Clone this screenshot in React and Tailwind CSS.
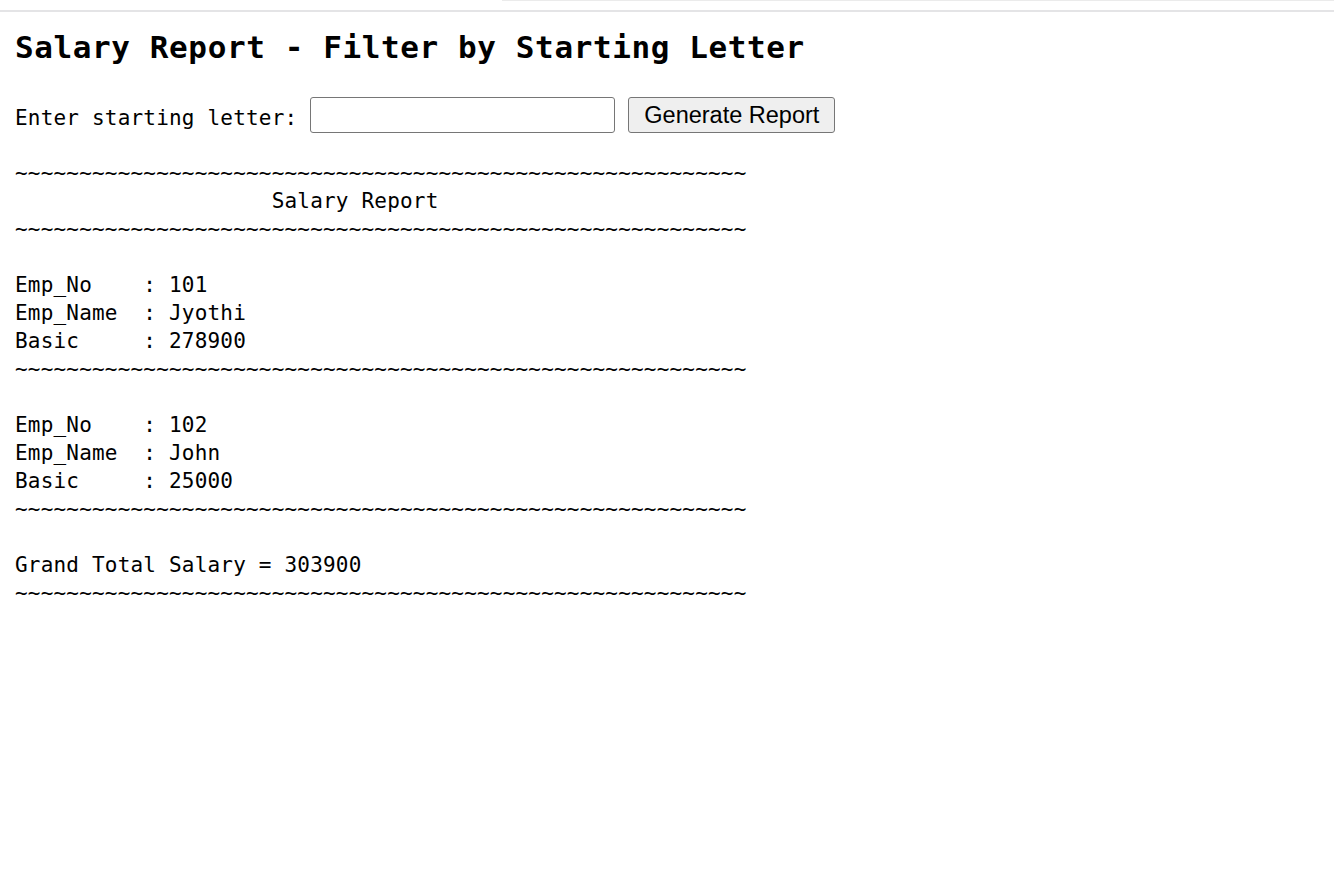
import React from "react";

const T = "~".repeat(57);
const report = [
  T,
  " ".repeat(20) + "Salary Report",
  T,
  "",
  "Emp_No    : 101",
  "Emp_Name  : Jyothi",
  "Basic     : 278900",
  T,
  "",
  "Emp_No    : 102",
  "Emp_Name  : John",
  "Basic     : 25000",
  T,
  "",
  "Grand Total Salary = 303900",
  T,
].join("\n");

export default function App() {
  return (
    <div className="min-h-[880px] bg-white text-black">
      <div className="flex h-px">
        <div className="w-[502px]" />
        <div className="flex-1 bg-[#ebebeb]" />
      </div>
      <div className="mt-[9px] h-[2px] bg-[#e4e4e6]" />
      <div className="px-[15px]">
        <h2 className="mt-[15px] font-['DejaVu_Sans_Mono',monospace] text-[31px] font-bold leading-[40px] tracking-[0.6px]">
          Salary Report - Filter by Starting Letter
        </h2>
        <div className="mt-[30px] flex h-[36px] items-center">
          <label className="pt-[6px] font-['DejaVu_Sans_Mono',monospace] text-[21px] leading-[28px] tracking-[0.19px]">
            Enter starting letter:
          </label>
          <input
            type="text"
            className="ml-[13px] h-[36px] w-[305px] rounded-[3px] border border-[#767676] bg-white px-1 outline-none"
          />
          <button className="ml-[13px] h-[36px] w-[207px] rounded-[3px] border border-[#767676] bg-[#efefef] pt-[2px] font-['Liberation_Sans',Arial,sans-serif] text-[23.5px] leading-none">
            Generate Report
          </button>
        </div>
        <pre className="mt-[26px] whitespace-pre font-['DejaVu_Sans_Mono',monospace] text-[21px] leading-[28px] tracking-[0.19px]">
          {report}
        </pre>
      </div>
    </div>
  );
}
